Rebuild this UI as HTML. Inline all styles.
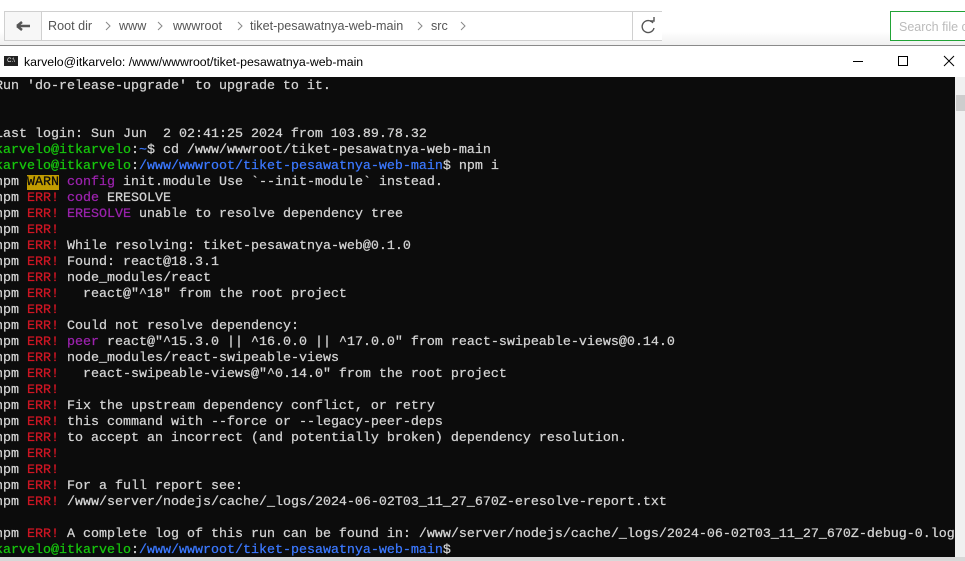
<!DOCTYPE html>
<html><head><style>
*{margin:0;padding:0;box-sizing:border-box}
body{width:965px;height:561px;overflow:hidden;background:#fff;position:relative;font-family:"Liberation Sans",sans-serif}
.top{position:absolute;left:0;top:0;width:965px;height:46px;background:linear-gradient(#fff 70%,#f0f0f0);border-bottom:1px solid #8a8a8a}
.crumb{position:absolute;left:4px;top:11px;width:658px;height:30px;border:1px solid #d0d0d0;background:#fff;font-size:12.6px;color:#555}
.back{position:absolute;left:0;top:0;width:37px;height:28px;border-right:1px solid #d0d0d0;background:#f7f7f7}
.crumb span{position:absolute;top:7px}
.crumb svg.c{position:absolute;top:9px}
.reload{position:absolute;left:627px;top:0;width:30px;height:28px;border-left:1px solid #d0d0d0;background:#fff}
.search{position:absolute;left:890px;top:11px;width:90px;height:30px;border:1px solid #21a336;background:#fff;color:#bbb;font-size:12.5px;padding:8px 0 0 8px;white-space:nowrap}
.title{position:absolute;left:0;top:47px;width:965px;height:30px;background:#fff;font-size:12.3px;color:#000}
.term{position:absolute;left:0;top:77px;width:955px;height:480px;background:#0c0c0c;overflow:hidden}
.sb{position:absolute;left:955px;top:77px;width:10px;height:480px;background:#f0f0f0}
.bot{position:absolute;left:0;top:557px;width:965px;height:4px;background:#d8d8d8}
pre{position:absolute;left:-5px;top:79px;font-family:"Liberation Mono",monospace;font-size:13.33px;line-height:16px;color:#d4d4d4;white-space:pre;-webkit-text-stroke:0.25px}
.r{color:#d01624}.p{color:#9b22ad}.g{color:#16c60c}.b{color:#3b78ff}.w{background:#c19c00;color:#0c0c0c}
</style></head><body>
<div class="top">
 <div class="crumb">
  <div class="back"><svg width="37" height="28"><path d="M12 14h13M12 14l5-4M12 14l5 4" stroke="#555" stroke-width="2.5" fill="none"/></svg></div>
  <span style="left:43px">Root dir</span><svg class="c" style="left:100px" width="6" height="10"><path d="M1 1l4 4l-4 4" stroke="#888" fill="none"/></svg>
  <span style="left:114px">www</span><svg class="c" style="left:152px" width="6" height="10"><path d="M1 1l4 4l-4 4" stroke="#888" fill="none"/></svg>
  <span style="left:168px">wwwroot</span><svg class="c" style="left:232px" width="6" height="10"><path d="M1 1l4 4l-4 4" stroke="#888" fill="none"/></svg>
  <span style="left:245px">tiket-pesawatnya-web-main</span><svg class="c" style="left:412px" width="6" height="10"><path d="M1 1l4 4l-4 4" stroke="#888" fill="none"/></svg>
  <span style="left:426px">src</span><svg class="c" style="left:455px" width="6" height="10"><path d="M1 1l4 4l-4 4" stroke="#888" fill="none"/></svg>
  <div class="reload"><svg width="30" height="28"><path d="M20 11A6 6 0 1 0 21 16" stroke="#555" stroke-width="1.4" fill="none"/><path d="M17 9l4 0l0-4" stroke="#555" stroke-width="1.4" fill="none"/></svg></div>
 </div>
 <div class="search">Search file co</div>
</div>
<div class="title">
 <div style="position:absolute;left:4px;top:9px;width:14px;height:10px;background:#222;color:#fff;font-size:6px;line-height:10px;text-align:center">C:\</div>
 <span style="position:absolute;left:24px;top:8px">karvelo@itkarvelo: /www/wwwroot/tiket-pesawatnya-web-main</span>
 <div style="position:absolute;left:853px;top:14px;width:10px;height:1px;background:#000"></div>
 <div style="position:absolute;left:898px;top:9px;width:10px;height:10px;border:1px solid #000"></div>
 <svg style="position:absolute;left:943px;top:8px" width="12" height="12"><path d="M1 1L11 11M11 1L1 11" stroke="#000" stroke-width="1"/></svg>
</div>
<div class="term"></div>
<pre>Run 'do-release-upgrade' to upgrade to it.


Last login: Sun Jun  2 02:41:25 2024 from 103.89.78.32
<span class="g">karvelo@itkarvelo</span>:<span class="b">~</span>$ cd /www/wwwroot/tiket-pesawatnya-web-main
<span class="g">karvelo@itkarvelo</span>:<span class="b">/www/wwwroot/tiket-pesawatnya-web-main</span>$ npm i
npm <span class="w">WARN</span> <span class="p">config</span> init.module Use `--init-module` instead.
npm <span class="r">ERR!</span> <span class="p">code</span> ERESOLVE
npm <span class="r">ERR!</span> <span class="p">ERESOLVE</span> unable to resolve dependency tree
npm <span class="r">ERR!</span>
npm <span class="r">ERR!</span> While resolving: tiket-pesawatnya-web@0.1.0
npm <span class="r">ERR!</span> Found: react@18.3.1
npm <span class="r">ERR!</span> node_modules/react
npm <span class="r">ERR!</span>   react@"^18" from the root project
npm <span class="r">ERR!</span>
npm <span class="r">ERR!</span> Could not resolve dependency:
npm <span class="r">ERR!</span> <span class="p">peer</span> react@"^15.3.0 || ^16.0.0 || ^17.0.0" from react-swipeable-views@0.14.0
npm <span class="r">ERR!</span> node_modules/react-swipeable-views
npm <span class="r">ERR!</span>   react-swipeable-views@"^0.14.0" from the root project
npm <span class="r">ERR!</span>
npm <span class="r">ERR!</span> Fix the upstream dependency conflict, or retry
npm <span class="r">ERR!</span> this command with --force or --legacy-peer-deps
npm <span class="r">ERR!</span> to accept an incorrect (and potentially broken) dependency resolution.
npm <span class="r">ERR!</span>
npm <span class="r">ERR!</span>
npm <span class="r">ERR!</span> For a full report see:
npm <span class="r">ERR!</span> /www/server/nodejs/cache/_logs/2024-06-02T03_11_27_670Z-eresolve-report.txt

npm <span class="r">ERR!</span> A complete log of this run can be found in: /www/server/nodejs/cache/_logs/2024-06-02T03_11_27_670Z-debug-0.log
<span class="g">karvelo@itkarvelo</span>:<span class="b">/www/wwwroot/tiket-pesawatnya-web-main</span>$</pre>
<div class="sb"><div style="position:absolute;left:1px;top:18px;width:9px;height:16px;background:#cdcdcd"></div></div>
<div class="bot"></div>
</body></html>
